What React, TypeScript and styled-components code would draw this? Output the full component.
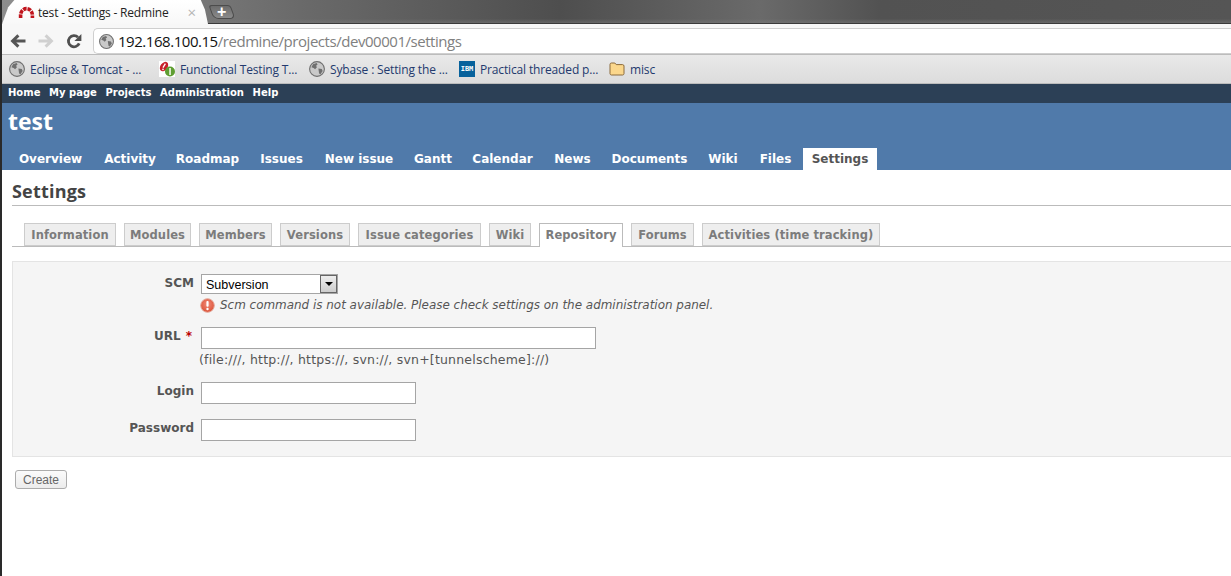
import React from "react";
import styled, { createGlobalStyle } from "styled-components";

const GlobalStyle = createGlobalStyle`
  html, body {
    margin: 0;
    padding: 0;
    background: #fff;
    overflow: hidden;
  }
  * { box-sizing: border-box; }
`;

const Page = styled.div`
  width: 1231px;
  height: 576px;
  overflow: hidden;
  border-left: 2px solid #2a2a2a;
  font-family: "DejaVu Sans", Verdana, sans-serif;
`;

const TitleStrip = styled.div`
  height: 24px;
  margin-left: -2px;
  display: flex;
  align-items: flex-end;
  background:
    linear-gradient(180deg, rgba(0, 0, 0, 0) 78%, rgba(120, 120, 120, 0.55) 96%, #3a3a3a 96%),
    linear-gradient(90deg, #8d8d8d 0, #7a7a7a 180px, #6a6a6a 300px, #4e4e4e 560px, #6a6a6a 760px, #525252 880px, #555 1231px);
`;

const BrowserTab = styled.div`
  width: 206px;
  height: 24px;
  margin-left: 2px;
  padding: 0 12px 0 16px;
  display: flex;
  align-items: center;
  gap: 3px;
  background: linear-gradient(180deg, #fff 0, #f8f8f8 100%);
  clip-path: polygon(0 100%, 3% 30%, 6% 0, 96.5% 0, 98.5% 40%, 100% 100%);
  font: 12px "Open Sans", "Noto Sans", sans-serif;
  letter-spacing: -0.2px;
  color: #222;
`;

const TabTitle = styled.span`
  flex: 1;
  white-space: nowrap;
`;

const TabClose = styled.span`
  color: #b5b5b5;
  font-size: 15px;
  line-height: 1;
`;

const NewTab = styled.div`
  width: 22px;
  height: 14px;
  margin: 0 0 5px 3px;
  display: flex;
  align-items: center;
  justify-content: center;
  background: linear-gradient(180deg, #6c6c6c, #8a8a8a);
  border: 1px solid #4c4c4c;
  border-radius: 3px 3px 5px 5px;
  transform: skewX(20deg);
  color: #fff;
  font: bold 16px "Liberation Sans", sans-serif;
`;

const NewTabSign = styled.span`
  transform: skewX(-20deg);
`;

const Toolbar = styled.div`
  height: 31px;
  display: flex;
  align-items: flex-start;
  padding: 4px 0 0 2px;
  background: #f7f7f7;
  border-bottom: 1px solid #bcbcbc;
`;

const NavButton = styled.div`
  width: 28px;
  height: 26px;
  display: flex;
  align-items: center;
  justify-content: center;
`;

const AddressBar = styled.div`
  flex: 1;
  height: 26px;
  margin-left: 5px;
  padding-left: 5px;
  display: flex;
  align-items: center;
  gap: 4px;
  background: #fff;
  border: 1px solid #cfcfcf;
  border-right: none;
  border-radius: 5px 0 0 5px;
  font: 15px "Open Sans", "Noto Sans", sans-serif;
  letter-spacing: -0.46px;
  color: #808080;
  white-space: nowrap;
`;

const Host = styled.span`
  color: #111;
`;

const BookmarkBar = styled.div`
  height: 29px;
  display: flex;
  align-items: center;
  padding-left: 7px;
  background: linear-gradient(180deg, #e9e9e9, #dcdcdc);
  border-bottom: 1px solid #bcbcbc;
`;

const Bookmark = styled.div`
  width: 150px;
  display: flex;
  align-items: center;
  gap: 5px;
  font: 12px "Open Sans", "Noto Sans", sans-serif;
  letter-spacing: -0.15px;
  color: #233a6e;
  white-space: nowrap;
`;

const IbmIcon = styled.span`
  width: 16px;
  height: 16px;
  display: flex;
  align-items: center;
  justify-content: center;
  background: #07629c;
  color: #fff;
  letter-spacing: 0;
  font: bold 7px "DejaVu Sans Mono", monospace;
`;

const TopMenu = styled.div`
  height: 19px;
  display: flex;
  align-items: center;
  gap: 8.6px;
  padding: 0 0 2px 6px;
  background: #2c4056;
  color: #fff;
  font-weight: bold;
  font-size: 10px;
`;

const Header = styled.div`
  height: 67px;
  display: flex;
  flex-direction: column;
  justify-content: space-between;
  background: #507aaa;
  color: #fff;
`;

const ProjectName = styled.h1`
  margin: 3px 0 0 6px;
  font: bold 23px/30px "Open Sans", "Noto Sans", sans-serif;
`;

const MainMenu = styled.div`
  display: flex;
  gap: 2px;
  padding-left: 6px;
`;

const MainItem = styled.div<{ $width: number; $selected?: boolean }>`
  width: ${(p) => p.$width}px;
  height: 22px;
  display: flex;
  align-items: center;
  justify-content: center;
  font-weight: bold;
  font-size: 12px;
  white-space: nowrap;
  background: ${(p) => (p.$selected ? "#fff" : "transparent")};
  color: ${(p) => (p.$selected ? "#555" : "#fff")};
`;

const Content = styled.div`
  padding: 10px 0 0 10px;
  color: #333;
`;

const Heading = styled.h2`
  margin: 0;
  height: 26px;
  border-bottom: 1px solid #bbb;
  font: bold 18px/22px "Open Sans", "Noto Sans", sans-serif;
  letter-spacing: 0.2px;
  color: #444;
`;

const TabRow = styled.div`
  height: 41px;
  display: flex;
  align-items: flex-end;
  gap: 8px;
  padding-left: 12px;
  border-bottom: 1px solid #bbb;
`;

const SubTab = styled.div<{ $width: number; $selected?: boolean }>`
  width: ${(p) => p.$width}px;
  height: ${(p) => (p.$selected ? "24px" : "23px")};
  margin-bottom: ${(p) => (p.$selected ? "-1px" : "0")};
  padding-bottom: ${(p) => (p.$selected ? "1px" : "0")};
  display: flex;
  align-items: center;
  justify-content: center;
  background: ${(p) => (p.$selected ? "#fff" : "#eee")};
  border: 1px solid ${(p) => (p.$selected ? "#bbb" : "#ccc")};
  border-bottom: ${(p) => (p.$selected ? "none" : "1px solid #ccc")};
  color: #7c7c7c;
  font-weight: bold;
  font-size: 11.5px;
  letter-spacing: 0.1px;
  white-space: nowrap;
`;

const FormBox = styled.div`
  height: 196px;
  margin-top: 14px;
  padding-top: 12px;
  background: #f5f5f5;
  border: 1px solid #e4e4e4;
  border-right: none;
`;

const Row = styled.div<{ $height: number }>`
  height: ${(p) => p.$height}px;
  display: grid;
  grid-template-columns: 181px 1fr;
  column-gap: 7px;
  align-items: start;
`;

const Label = styled.label`
  padding-top: 2px;
  text-align: right;
  font-weight: bold;
  font-size: 12px;
  color: #555;
`;

const Required = styled.span`
  color: #b00;
  margin: 0 2px 0 1px;
`;

const SelectBox = styled.div`
  width: 137px;
  height: 20px;
  display: flex;
  align-items: center;
  justify-content: space-between;
  padding-left: 4px;
  background: #fff;
  border: 1px solid #a5a5a5;
  font: 12.5px "Liberation Sans", Arial, sans-serif;
  color: #000;
`;

const SelectValue = styled.span`
  margin-top: 2px;
`;

const SelectArrow = styled.span`
  width: 17px;
  height: 18px;
  display: flex;
  align-items: center;
  justify-content: center;
  background: linear-gradient(180deg, #eee, #ccc);
  border: 1px solid #666;
  &::after {
    content: "";
    border: 4px solid transparent;
    border-top: 4px solid #000;
    border-bottom: none;
  }
`;

const TextInput = styled.input<{ $width: number }>`
  display: block;
  width: ${(p) => p.$width}px;
  height: 22px;
  padding: 0 3px;
  background: #fff;
  border: 1px solid #a5a5a5;
  border-radius: 0;
`;

const Warning = styled.div`
  margin: 4px 0 0 -1px;
  display: flex;
  align-items: center;
  gap: 5px;
  font-style: italic;
  font-size: 11.95px;
  line-height: 15px;
  white-space: nowrap;
  color: #555;
`;

const Hint = styled.div`
  margin: 3px 0 0 -2px;
  font-size: 12.5px;
  letter-spacing: 0.2px;
  line-height: 15px;
  white-space: nowrap;
  color: #555;
`;

const CreateButton = styled.button`
  display: block;
  width: 52px;
  height: 19px;
  margin: 13px 0 0 3px;
  padding: 0;
  background: linear-gradient(180deg, #fbfbfb, #ececec);
  border: 1px solid #acacac;
  border-radius: 3px;
  font: 12px "Liberation Sans", Arial, sans-serif;
  color: #666;
`;

const Globe = ({ size = 16 }: { size?: number }) => (
  <svg width={size} height={size} viewBox="0 0 16 16">
    <circle cx="8" cy="8" r="7.4" fill="#c9c9c9" stroke="#6f6f6f" strokeWidth="1.1" />
    <path d="M4 3.2 7.6 2l1 1.6-1.5 1.2.8 1.5-1.8 2L4.6 7 2.4 6.2z" fill="#6f6f6f" />
    <path d="M9.4 7.4l3.4.6.9 2-2.2 3.2-1.4-.6-.4-2.8z" fill="#6f6f6f" />
  </svg>
);

const RedmineLogo = () => (
  <svg width="17" height="12" viewBox="0 0 17 12">
    <path
      d="M2.6 12V9.2A5.9 6.6 0 0 1 14.4 9.2V12"
      fill="none"
      stroke="#c0141c"
      strokeWidth="3.6"
      strokeDasharray="3.6 0.9"
    />
  </svg>
);

const BackArrow = ({ color }: { color: string }) => (
  <svg width="16" height="14" viewBox="0 0 16 14">
    <path d="M15.5 7H3.5M8.4 1.4 2.6 7l5.8 5.6" fill="none" stroke={color} strokeWidth="3" />
  </svg>
);

const ForwardArrow = ({ color }: { color: string }) => (
  <svg width="16" height="14" viewBox="0 0 16 14">
    <path d="M.5 7h12M7.6 1.4 13.4 7l-5.8 5.6" fill="none" stroke={color} strokeWidth="3" />
  </svg>
);

const ReloadIcon = () => (
  <svg width="16" height="16" viewBox="0 0 16 16">
    <path d="M13.2 10.4A5.6 5.6 0 1 1 12 4.2" fill="none" stroke="#4f4f4f" strokeWidth="2.8" />
    <path d="M15.4 1v7H8.4z" fill="#4f4f4f" />
  </svg>
);

const TestingIcon = () => (
  <svg width="16" height="16" viewBox="0 0 16 16">
    <rect width="16" height="16" fill="#fff" />
    <ellipse cx="5" cy="5.6" rx="3.6" ry="5.2" transform="rotate(35 5 5.6)" fill="#c8202a" />
    <path d="M6.4 2.6 4 6.6" stroke="#fff" strokeWidth="1.3" />
    <circle cx="4" cy="8.4" r="0.8" fill="#fff" />
    <circle cx="11" cy="10.5" r="5" fill="#5f9e32" />
    <rect x="10.2" y="7" width="1.7" height="7" fill="#e8f2dd" />
  </svg>
);

const FolderIcon = () => (
  <svg width="16" height="14" viewBox="0 0 16 14">
    <path
      d="M1 2.4C1 1.6 1.6 1 2.4 1h3.4l1.4 1.6h6.4c.8 0 1.4.6 1.4 1.4v7.6c0 .8-.6 1.4-1.4 1.4H2.4c-.8 0-1.4-.6-1.4-1.4z"
      fill="#fbd78c"
      stroke="#8b6a3c"
    />
  </svg>
);

const ErrorIcon = () => (
  <svg width="15" height="15" viewBox="0 0 15 15">
    <defs>
      <radialGradient id="errorFill" cx="50%" cy="40%" r="60%">
        <stop offset="0%" stopColor="#f08a76" />
        <stop offset="100%" stopColor="#dc5238" />
      </radialGradient>
    </defs>
    <circle cx="7.5" cy="7.5" r="6.8" fill="url(#errorFill)" stroke="#e3a698" />
    <rect x="6.4" y="3" width="2.2" height="5.8" rx="1" fill="#fff" />
    <circle cx="7.5" cy="11" r="1.2" fill="#fff" />
  </svg>
);

const bookmarks = [
  { icon: <Globe size={16} />, label: "Eclipse & Tomcat - ..." },
  { icon: <TestingIcon />, label: "Functional Testing T..." },
  { icon: <Globe size={16} />, label: "Sybase : Setting the ..." },
  { icon: <IbmIcon>IBM</IbmIcon>, label: "Practical threaded p..." },
  { icon: <FolderIcon />, label: "misc" },
];

const topLinks = ["Home", "My page", "Projects", "Administration", "Help"];

const mainLinks = [
  { label: "Overview", width: 85 },
  { label: "Activity", width: 70 },
  { label: "Roadmap", width: 81 },
  { label: "Issues", width: 63 },
  { label: "New issue", width: 88 },
  { label: "Gantt", width: 56 },
  { label: "Calendar", width: 79 },
  { label: "News", width: 57 },
  { label: "Documents", width: 93 },
  { label: "Wiki", width: 50 },
  { label: "Files", width: 51 },
  { label: "Settings", width: 74 },
];

const subTabs = [
  { label: "Information", width: 92 },
  { label: "Modules", width: 67 },
  { label: "Members", width: 73 },
  { label: "Versions", width: 70 },
  { label: "Issue categories", width: 123 },
  { label: "Wiki", width: 42 },
  { label: "Repository", width: 84 },
  { label: "Forums", width: 63 },
  { label: "Activities (time tracking)", width: 178 },
];

export default function App() {
  return (
    <Page>
      <GlobalStyle />
      <TitleStrip>
        <BrowserTab>
          <RedmineLogo />
          <TabTitle>test - Settings - Redmine</TabTitle>
          <TabClose>×</TabClose>
        </BrowserTab>
        <NewTab>
          <NewTabSign>+</NewTabSign>
        </NewTab>
      </TitleStrip>
      <Toolbar>
        <NavButton>
          <BackArrow color="#555" />
        </NavButton>
        <NavButton>
          <ForwardArrow color="#d0d0d0" />
        </NavButton>
        <NavButton>
          <ReloadIcon />
        </NavButton>
        <AddressBar>
          <Globe size={15} />
          <span>
            <Host>192.168.100.15</Host>/redmine/projects/dev00001/settings
          </span>
        </AddressBar>
      </Toolbar>
      <BookmarkBar>
        {bookmarks.map((b) => (
          <Bookmark key={b.label}>
            {b.icon}
            {b.label}
          </Bookmark>
        ))}
      </BookmarkBar>
      <TopMenu>
        {topLinks.map((l) => (
          <span key={l}>{l}</span>
        ))}
      </TopMenu>
      <Header>
        <ProjectName>test</ProjectName>
        <MainMenu>
          {mainLinks.map((l) => (
            <MainItem key={l.label} $width={l.width} $selected={l.label === "Settings"}>
              {l.label}
            </MainItem>
          ))}
        </MainMenu>
      </Header>
      <Content>
        <Heading>Settings</Heading>
        <TabRow>
          {subTabs.map((t) => (
            <SubTab key={t.label} $width={t.width} $selected={t.label === "Repository"}>
              {t.label}
            </SubTab>
          ))}
        </TabRow>
        <FormBox>
          <Row $height={53}>
            <Label>SCM</Label>
            <div>
              <SelectBox>
                <SelectValue>Subversion</SelectValue>
                <SelectArrow />
              </SelectBox>
              <Warning>
                <ErrorIcon />
                Scm command is not available. Please check settings on the administration panel.
              </Warning>
            </div>
          </Row>
          <Row $height={55}>
            <Label>
              URL <Required>*</Required>
            </Label>
            <div>
              <TextInput $width={395} />
              <Hint>(file:///, http://, https://, svn://, svn+[tunnelscheme]://)</Hint>
            </div>
          </Row>
          <Row $height={37}>
            <Label>Login</Label>
            <TextInput $width={215} />
          </Row>
          <Row $height={37}>
            <Label>Password</Label>
            <TextInput $width={215} />
          </Row>
        </FormBox>
        <CreateButton>Create</CreateButton>
      </Content>
    </Page>
  );
}
